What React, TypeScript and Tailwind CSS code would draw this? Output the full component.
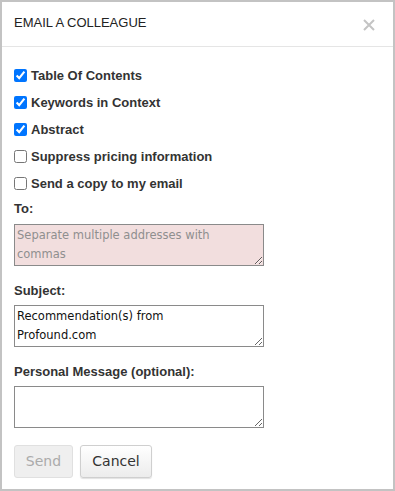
import { useState } from "react";

const options = [
  { label: "Table Of Contents", checked: true },
  { label: "Keywords in Context", checked: true },
  { label: "Abstract", checked: true },
  { label: "Suppress pricing information", checked: false },
  { label: "Send a copy to my email", checked: false },
];

const EmailColleague = () => {
  const [checks, setChecks] = useState(options.map((o) => o.checked));

  return (
    <div className="w-[395px] h-[491px] border-2 border-[#c3c3c3] bg-white font-['Liberation_Sans',Arial,sans-serif] text-[#222]">
      <div className="h-[45px] border-b border-[#e5e5e5] flex items-center justify-between pl-[12px] pr-[18px]">
        <p className="text-[13px] text-[#222] -mt-[2px]">EMAIL A COLLEAGUE</p>
        <svg width="12" height="12" viewBox="0 0 12 12" className="mt-[1px]">
          <path d="M1 1 L11 11 M11 1 L1 11" stroke="#c4c4c4" strokeWidth="2" />
        </svg>
      </div>

      <div className="px-[12px] pt-[22px]">
        <div className="flex flex-col gap-[14px]">
          {options.map((o, i) => (
            <label key={o.label} className="flex items-center h-[13px] gap-[4px] text-[13px] font-bold text-[#333]">
              <input
                type="checkbox"
                checked={checks[i]}
                onChange={() => setChecks(checks.map((c, j) => (j === i ? !c : c)))}
                className="w-[13px] h-[13px] m-0 accent-[#0075ff]"
              />
              {o.label}
            </label>
          ))}
        </div>

        <p className="mt-[9px] text-[13px] font-bold text-[#333]">To:</p>
        <textarea
          placeholder="Separate multiple addresses with commas"
          className="mt-[5px] block w-[250px] h-[42px] border border-[#8a8a8a] bg-[#f2dede] px-[2px] py-[1px] text-[11.5px] leading-[19px] font-['DejaVu_Sans',Verdana,sans-serif] placeholder:text-[#8f8f8f] outline-none"
        />

        <p className="mt-[15px] text-[13px] font-bold text-[#333]">Subject:</p>
        <textarea
          defaultValue={"Recommendation(s) from\nProfound.com"}
          className="mt-[5px] block w-[250px] h-[42px] border border-[#8a8a8a] bg-white px-[2px] py-[1px] text-[11.5px] leading-[19px] font-['DejaVu_Sans',Verdana,sans-serif] text-[#111] outline-none"
        />

        <p className="mt-[15px] text-[13px] font-bold text-[#333]">Personal Message (optional):</p>
        <textarea className="mt-[4px] block w-[250px] h-[42px] border border-[#8a8a8a] bg-white px-[2px] py-[1px] text-[11.5px] outline-none" />

        <div className="mt-[17px] flex gap-[7px]">
          <button
            disabled
            className="w-[59px] h-[33px] rounded-[3px] border border-[#e0e0e0] bg-[#efefef] text-[14px] text-[#ababab] font-['DejaVu_Sans',Verdana,sans-serif]"
          >
            Send
          </button>
          <button className="w-[72px] h-[33px] rounded-[3px] border border-[#cfcfcf] bg-gradient-to-b from-white to-[#ececec] text-[14px] text-[#333] font-['DejaVu_Sans',Verdana,sans-serif] shadow-[0_1px_1px_rgba(0,0,0,0.12)]">
            Cancel
          </button>
        </div>
      </div>
    </div>
  );
};

export default function App() {
  return <EmailColleague />;
}
